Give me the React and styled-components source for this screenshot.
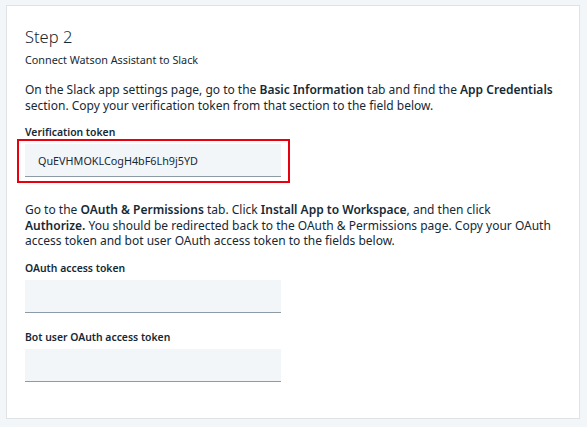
import React from 'react';
import styled, { createGlobalStyle } from 'styled-components';

const GlobalStyle = createGlobalStyle`
  body {
    margin: 0;
    background: #f3f6f9;
    font-family: "Noto Sans", "Open Sans", sans-serif;
    color: #152935;
  }
`;

const Page = styled.main`
  width: 587px;
  height: 427px;
  padding: 5px 7px 8px 6px;
  box-sizing: border-box;
`;

const Card = styled.section`
  height: 100%;
  box-sizing: border-box;
  background: #ffffff;
  border: 1px solid #dfe3e6;
  padding: 20px 18px 18px 18px;
  display: flex;
  flex-direction: column;
`;

const Title = styled.h2`
  margin: 0;
  font-size: 16.5px;
  font-weight: 300;
  line-height: 22px;
`;

const Subtitle = styled.p`
  margin: 4px 0 0;
  font-size: 10.8px;
  line-height: 16px;
`;

const Text = styled.p`
  margin: ${(p) => p.$top || 14}px 0 0;
  font-size: 12px;
  line-height: 15.5px;
  b {
    font-weight: 600;
  }
`;

const Field = styled.div`
  margin-top: ${(p) => p.$top || 10}px;
  display: flex;
  flex-direction: column;
  align-items: flex-start;
`;

const Label = styled.label`
  font-size: 10.4px;
  font-weight: 600;
  line-height: 14px;
  margin-bottom: 5px;
`;

const Highlight = styled.div`
  border: 2px solid #e8000f;
  padding: 3px 7px 4px 6px;
  margin: -5px 0 0 -8px;
`;

const Input = styled.input`
  width: 256px;
  height: 33px;
  box-sizing: border-box;
  border: none;
  border-bottom: 1px solid #8c9ba5;
  background: #f3f6f9;
  padding: 0 13px;
  font-family: inherit;
  font-size: 10.8px;
  color: #152935;
  outline: none;
`;

export default function App() {
  return (
    <>
      <GlobalStyle />
      <Page>
        <Card>
          <Title>Step 2</Title>
          <Subtitle>Connect Watson Assistant to Slack</Subtitle>
          <Text $top={14}>
            On the Slack app settings page, go to the <b>Basic Information</b> tab and find
            the <b>App Credentials</b>
            <br />
            section. Copy your verification token from that section to the field below.
          </Text>
          <Field $top={12}>
            <Label>Verification token</Label>
            <Highlight>
              <Input defaultValue="QuEVHMOKLCogH4bF6Lh9j5YD" />
            </Highlight>
          </Field>
          <Text $top={19}>
            Go to the <b>OAuth &amp; Permissions</b> tab. Click <b>Install App to Workspace</b>,
            and then click
            <br />
            <b>Authorize.</b> You should be redirected back to the OAuth &amp; Permissions
            page. Copy your OAuth
            <br />
            access token and bot user OAuth access token to the fields below.
          </Text>
          <Field $top={12}>
            <Label>OAuth access token</Label>
            <Input />
          </Field>
          <Field $top={17}>
            <Label>Bot user OAuth access token</Label>
            <Input />
          </Field>
        </Card>
      </Page>
    </>
  );
}
